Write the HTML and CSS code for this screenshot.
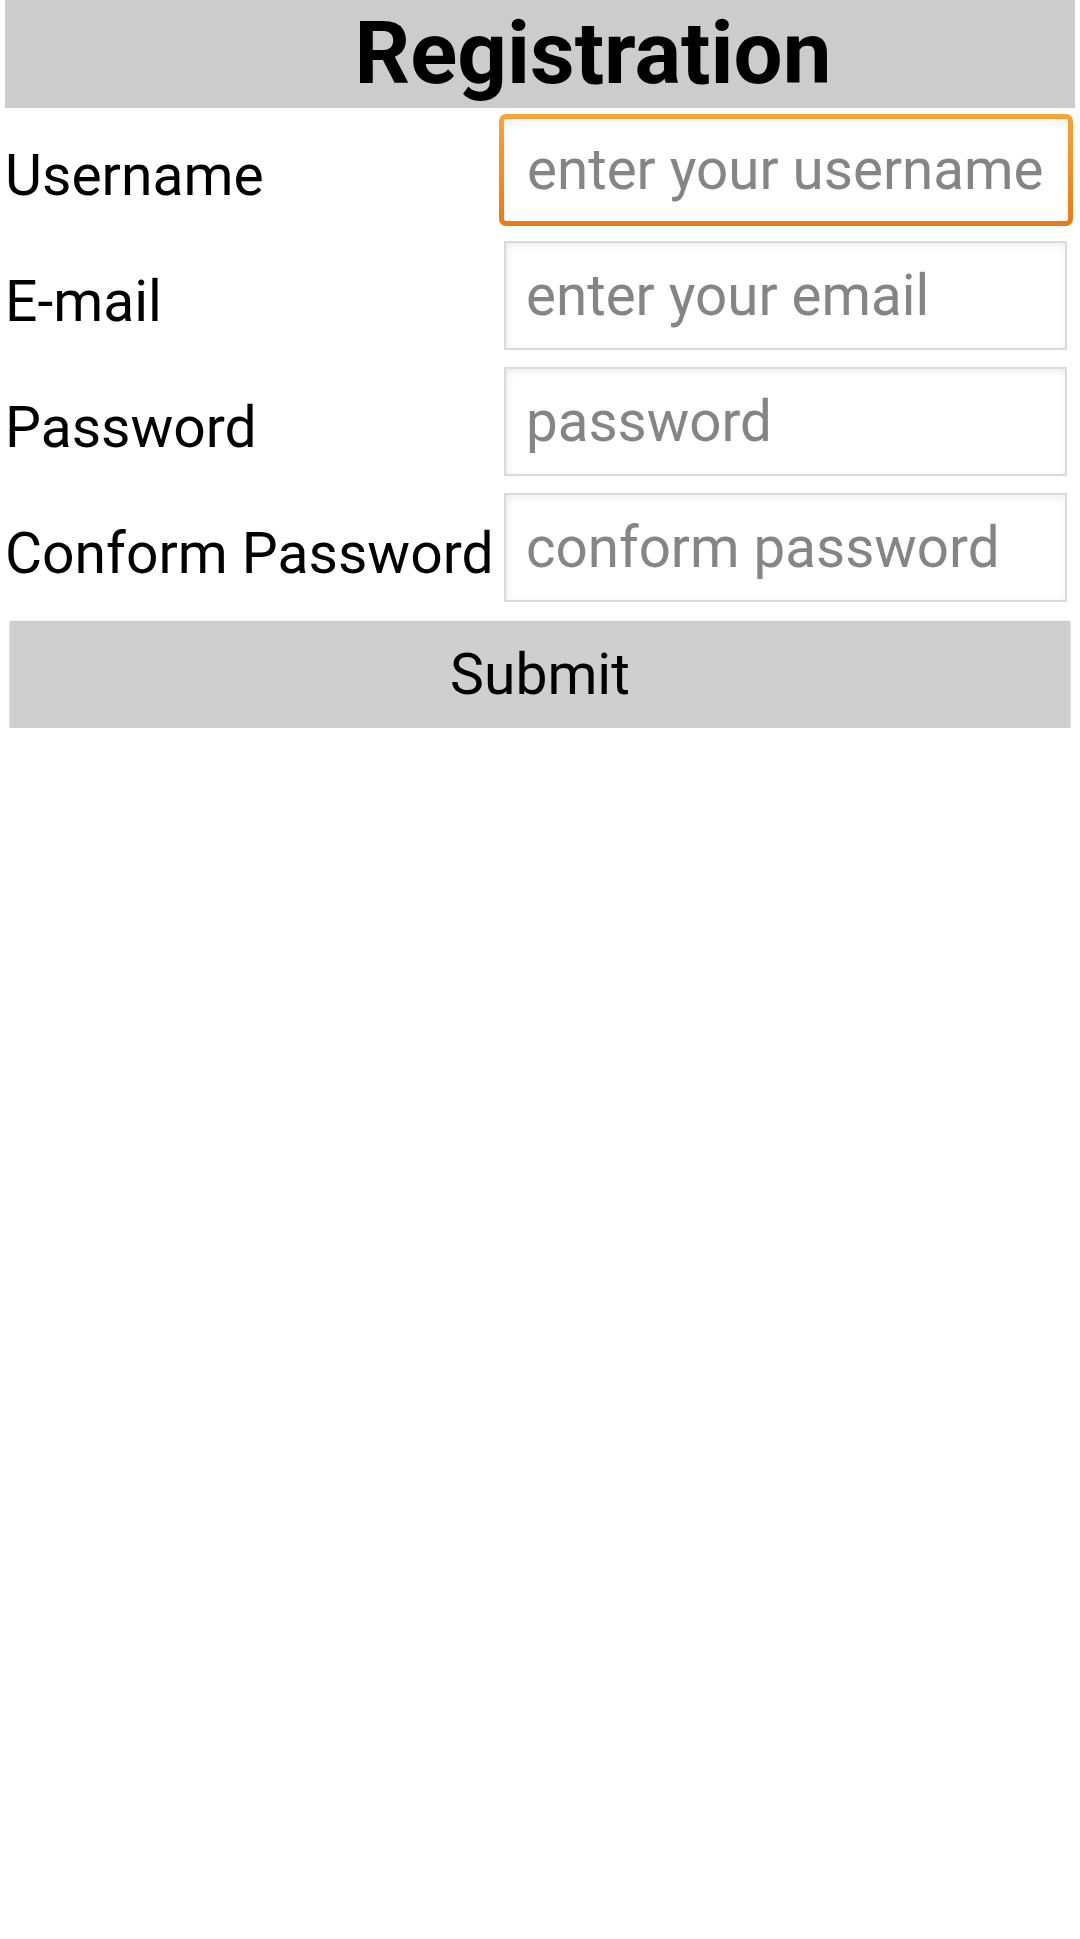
FILE: index.html
```html
<!DOCTYPE html>
<html lang="en">
<head>
<meta charset="utf-8">
<title>Registration</title>
<link rel="stylesheet" href="styles.css">
</head>
<body>
<div class="page">
  <header class="title-bar"><h1 class="title">Registration</h1></header>
  <form class="form">
    <label class="label" for="u">Username</label>
    <input class="field field-focus" id="u" type="text" placeholder="enter your username">
    <label class="label" for="e">E-mail</label>
    <input class="field" id="e" type="text" placeholder="enter your email">
    <label class="label" for="p">Password</label>
    <input class="field" id="p" type="password" placeholder="password">
    <label class="label" for="c">Conform Password</label>
    <input class="field" id="c" type="password" placeholder="conform password">
    <button class="submit" type="button">Submit</button>
  </form>
</div>
</body>
</html>
```
FILE: styles.css
```css
html, body {
  margin: 0;
  padding: 0;
  background: #ffffff;
}
body {
  font-family: Roboto, "Noto Sans", "Liberation Sans", sans-serif;
  color: #000;
}
.page {
  padding: 0 5px;
}
.title-bar {
  background: #cccccc;
  height: 108px;
  box-sizing: border-box;
  padding: 2px 0 4px 106px;
  text-align: center;
}
.title {
  margin: 0;
  font-size: 87px;
  font-weight: 700;
  line-height: 102px;
}
.form {
  margin-top: 7px;
  display: grid;
  grid-template-columns: 499px 1fr;
  grid-auto-rows: 109px;
  row-gap: 17px;
  align-items: center;
}
.label {
  font-size: 57px;
  padding-top: 12px;
  line-height: 66px;
  white-space: nowrap;
}
.field {
  box-sizing: border-box;
  width: 563px;
  height: 109px;
  margin: 0;
  padding: 0 20px;
  font-family: Roboto, "Noto Sans", "Liberation Sans", sans-serif;
  font-size: 56.5px;
  color: #000;
  background: #ffffff;
  border: 2px solid #dadada;
  border-radius: 0;
  box-shadow: inset 0 4px 8px rgba(0, 0, 0, 0.05), inset 3px 0 6px rgba(0, 0, 0, 0.03);
  outline: none;
}
.field::placeholder {
  color: #858585;
  opacity: 1;
}
.field-focus {
  width: 574px;
  height: 112px;
  margin-left: -5px;
  padding-left: 23px;
  border: 5px solid transparent;
  border-radius: 7px;
  background:
    linear-gradient(#ffffff, #ffffff) padding-box,
    linear-gradient(#f8a43a, #ec7912) border-box;
  box-shadow: inset 0 4px 8px rgba(0, 0, 0, 0.05);
}
.submit {
  grid-column: 1 / -1;
  margin: 2px 5px 0;
  height: 108px;
  font-family: Roboto, "Noto Sans", "Liberation Sans", sans-serif;
  font-size: 57px;
  color: #000;
  background: #cfcfcf;
  border: none;
  border-radius: 0;
  box-shadow: 0 2px 3px rgba(0, 0, 0, 0.2), 0 0 1px rgba(0, 0, 0, 0.15);
  padding: 0;
}
```
